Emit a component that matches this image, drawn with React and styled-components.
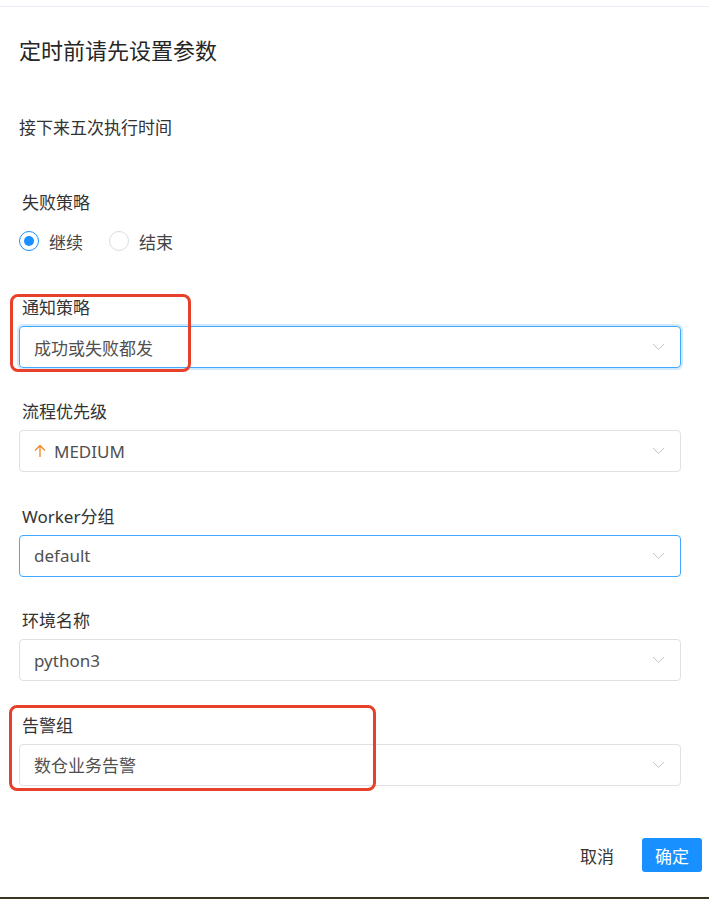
import styled, { createGlobalStyle } from "styled-components";

const GlobalStyle = createGlobalStyle`
  html, body {
    margin: 0;
    padding: 0;
    background: #ffffff;
  }
  body {
    font-family: "Noto Sans", "Noto Sans CJK SC", sans-serif;
  }
`;

const Page = styled.div`
  width: 709px;
  height: 893px;
  margin-top: 6px;
  display: flex;
  flex-direction: column;
  box-sizing: border-box;
  border-top: 1px solid #ececf4;
  border-bottom: 2px solid #3a3522;
  background: #fff;
`;

const Title = styled.div`
  font-size: 22px;
  line-height: 30px;
  color: #262626;
  padding: 28px 0 0 19px;
`;

const Body = styled.div`
  display: flex;
  flex-direction: column;
  padding: 0 28px 0 19px;
  flex: 1;
`;

const Hint = styled.div`
  font-size: 17px;
  line-height: 24px;
  color: #333;
  margin-top: 51px;
  margin-bottom: 51px;
`;

const Item = styled.div`
  position: relative;
  display: flex;
  flex-direction: column;
  margin-bottom: ${(p) => p.$mb ?? 32.4}px;
`;

const Label = styled.div`
  font-size: 17px;
  line-height: 24px;
  color: #333;
  padding-left: 3px;
  margin-bottom: ${(p) => p.$mb ?? 6}px;
`;

const RadioRow = styled.div`
  display: flex;
  align-items: center;
  gap: 26px;
  height: 24px;
`;

const Radio = styled.label`
  display: flex;
  align-items: center;
  gap: 10px;
  font-size: 17px;
  color: #444;
`;

const Dot = styled.span`
  width: 20px;
  height: 20px;
  box-sizing: border-box;
  border-radius: 50%;
  border: 1px solid ${(p) => (p.$on ? "#1890ff" : "#dcdcdc")};
  display: flex;
  align-items: center;
  justify-content: center;
  &::after {
    content: "";
    width: 10px;
    height: 10px;
    border-radius: 50%;
    background: ${(p) => (p.$on ? "#1890ff" : "transparent")};
  }
`;

const Select = styled.div`
  width: 662px;
  height: 42px;
  box-sizing: border-box;
  border: 1px solid ${(p) => (p.$active ? "#40a9ff" : "#e0e0e6")};
  border-radius: 4px;
  box-shadow: ${(p) => (p.$glow ? "0 0 0 2px rgba(24,144,255,0.2)" : "none")};
  display: flex;
  align-items: center;
  padding: 0 15px 0 14px;
  font-size: 17px;
  color: #505050;
`;

const Value = styled.span`
  flex: 1;
  display: flex;
  align-items: center;
  gap: 8px;
`;

const Frame = styled.div`
  position: absolute;
  box-sizing: border-box;
  border: 3px solid #e8412b;
  border-radius: 8px;
  pointer-events: none;
`;

const Footer = styled.div`
  display: flex;
  justify-content: flex-end;
  align-items: center;
  gap: 28px;
  padding: 0 7px 25px 0;
  margin-top: auto;
`;

const TextButton = styled.button`
  border: none;
  background: none;
  font-family: inherit;
  font-size: 17px;
  color: #333;
  padding: 0;
`;

const PrimaryButton = styled.button`
  border: none;
  border-radius: 3px;
  background: #1890ff;
  color: #fff;
  font-family: inherit;
  font-size: 17px;
  width: 60px;
  height: 34px;
  padding: 0;
`;

const Chevron = () => (
  <svg width="13" height="8" viewBox="0 0 13 8">
    <path d="M1 1l5.5 5.5L12 1" fill="none" stroke="#c4c4c4" strokeWidth="1" />
  </svg>
);

const UpArrow = () => (
  <svg width="12" height="14" viewBox="0 0 12 14">
    <path d="M6 13V1.5M1 6.5L6 1.5l5 5" fill="none" stroke="#f08a24" strokeWidth="1.3" />
  </svg>
);

const Field = ({ label, children, active, glow, frame }) => (
  <Item>
    <Label>{label}</Label>
    <Select $active={active} $glow={glow}>
      <Value>{children}</Value>
      <Chevron />
    </Select>
    {frame && <Frame style={frame} />}
  </Item>
);

export default function App() {
  return (
    <>
      <GlobalStyle />
      <Page>
        <Title>定时前请先设置参数</Title>
        <Body>
          <Hint>接下来五次执行时间</Hint>
          <Item $mb={43}>
            <Label $mb={14}>失败策略</Label>
            <RadioRow>
              <Radio>
                <Dot $on />
                继续
              </Radio>
              <Radio>
                <Dot />
                结束
              </Radio>
            </RadioRow>
          </Item>
          <Field
            label="通知策略"
            active
            glow
            frame={{ left: -9, top: -2, width: 181, height: 78 }}
          >
            成功或失败都发
          </Field>
          <Field label="流程优先级">
            <UpArrow />
            MEDIUM
          </Field>
          <Field label="Worker分组" active>
            default
          </Field>
          <Field label="环境名称">python3</Field>
          <Field
            label="告警组"
            frame={{ left: -10, top: -9, width: 367, height: 86 }}
          >
            数仓业务告警
          </Field>
        </Body>
        <Footer>
          <TextButton>取消</TextButton>
          <PrimaryButton>确定</PrimaryButton>
        </Footer>
      </Page>
    </>
  );
}
